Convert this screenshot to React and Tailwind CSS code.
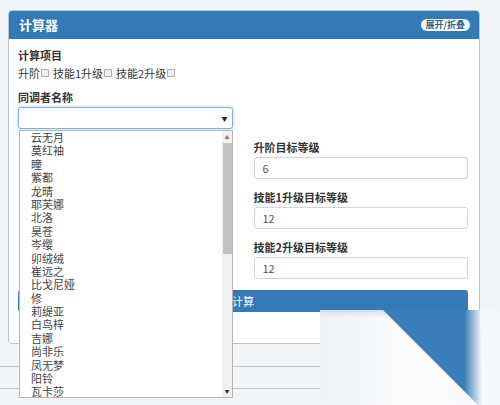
import { useState } from 'react'

const FONT = { fontFamily: '"Microsoft YaHei", "Noto Sans CJK SC", "Liberation Sans", sans-serif' }

const NAMES = [
  '云无月', '莫红袖', '瞳', '紫都', '龙晴', '耶芙娜', '北洛', '昊苍', '岑缨', '卯绒绒',
  '崔远之', '比戈尼娅', '修', '莉缇亚', '白鸟梓', '吉娜', '尚非乐', '凤无梦', '阳铃', '瓦卡莎',
]

function Check({ label }) {
  return (
    <span className="inline-flex items-center mr-[4px]">
      {label}
      <span className="inline-block w-[8px] h-[8px] ml-[1px] border border-[#a9a9a9] rounded-[1px] bg-[#f1f1f1]" />
    </span>
  )
}

function Field({ label, value }) {
  return (
    <div>
      <div className="h-[14px] leading-[14px] text-[11px] font-bold text-[#333]">{label}</div>
      <div className="mt-[3px] h-[22px] border border-[#d4d4d4] rounded-[3px] bg-white pl-[8px] text-[11px] leading-[20px] text-[#555]">
        {value}
      </div>
    </div>
  )
}

export default function App() {
  const [open, setOpen] = useState(true)

  return (
    <div className="relative w-[500px] h-[405px] overflow-hidden bg-[#f3f6f9]" style={FONT}>
      <div className="pt-[10px] pl-[8px]">
        <div className="w-[472px] h-[334px] bg-white border border-[#b9c3cc] rounded-[4px] overflow-hidden">
          {/* header */}
          <div className="h-[28px] bg-[#337ab7] flex items-center justify-between pl-[10px] pr-[9px]">
            <span className="text-white font-bold text-[13px]">计算器</span>
            <button
              onClick={() => setOpen(!open)}
              className="h-[12px] px-[5px] rounded-full bg-white text-[#2b5d8c] text-[9px] leading-[12px] font-bold"
            >
              展开/折叠
            </button>
          </div>

          {/* body */}
          <div className="pl-[9px] pr-[11px] pt-[9px]">
            <div className="h-[14px] leading-[14px] text-[11px] font-bold text-[#333]">计算项目</div>
            <div className="mt-[4px] h-[14px] flex items-center text-[11px] text-[#333]">
              <Check label="升阶" />
              <Check label="技能1升级" />
              <Check label="技能2升级" />
            </div>

            <div className="mt-[10px] grid grid-cols-2 gap-x-[21px] gap-y-[11px]">
              <div>
                <div className="h-[14px] leading-[14px] text-[11px] font-bold text-[#333]">同调者名称</div>
                <div className="mt-[3px] h-[22px] border border-[#7fb2e0] rounded-[3px] bg-white shadow-[0_0_3px_rgba(102,175,233,0.6)] flex items-center justify-end pr-[4px]">
                  <span className="text-[6px] text-[#222]">▼</span>
                </div>
              </div>
              <div />
              <div className="h-[39px]" />
              <Field label="升阶目标等级" value="6" />
              <div className="h-[39px]" />
              <Field label="技能1升级目标等级" value="12" />
              <div className="h-[39px]" />
              <Field label="技能2升级目标等级" value="12" />
            </div>

            <button className="mt-[11px] w-full h-[22px] bg-[#337ab7] rounded-[3px] text-white text-[11px]">计算</button>
          </div>
        </div>
      </div>

      {/* rows below the panel */}
      <div className="absolute left-0 top-[366px] w-full h-[1px] bg-[#c3c8ce]" />
      <div className="absolute left-0 top-[388px] w-full h-[1px] bg-[#c3c8ce]" />

      {/* open select dropdown */}
      {open && (
        <div className="absolute left-[19px] top-[130px] w-[214px] h-[268px] bg-white border border-[#b5b5b5] flex">
          <div className="flex-1">
            {NAMES.map((n) => (
              <div key={n} className="h-[13.4px] leading-[13.4px] pl-[11px] text-[11px] text-[#444]">{n}</div>
            ))}
          </div>
          <div className="w-[10px] bg-[#f0f0f0] flex flex-col items-center">
            <div className="h-[12px] text-[5px] leading-[12px] text-[#777]">▲</div>
            <div className="w-[9px] h-[111px] bg-[#c1c1c1]" />
            <div className="flex-1" />
            <div className="h-[12px] text-[5px] leading-[12px] text-[#333]">▼</div>
          </div>
        </div>
      )}

      {/* page curl mark in the corner */}
      <svg className="absolute left-[320px] top-[310px]" width="180" height="95" viewBox="0 0 180 95">
        <defs>
          <linearGradient id="bg" x1="0" y1="0" x2="1" y2="0">
            <stop offset="0" stopColor="#eef2f6" />
            <stop offset="0.5" stopColor="#fbfcfd" />
            <stop offset="1" stopColor="#f5f8fb" />
          </linearGradient>
          <linearGradient id="blue" x1="0" y1="0" x2="1" y2="0">
            <stop offset="0" stopColor="#3a7db8" />
            <stop offset="0.82" stopColor="#3a7db8" />
            <stop offset="1" stopColor="#3a7db8" stopOpacity="0" />
          </linearGradient>
          <linearGradient id="top" x1="0" y1="0" x2="0" y2="1">
            <stop offset="0" stopColor="#d8dee5" />
            <stop offset="1" stopColor="#d8dee5" stopOpacity="0" />
          </linearGradient>
        </defs>
        <rect x="0" y="0" width="180" height="95" fill="url(#bg)" />
        <rect x="0" y="0" width="70" height="8" fill="url(#top)" />
        <polygon points="63,0 160,0 162,95 158,95" fill="url(#blue)" />
      </svg>
    </div>
  )
}
